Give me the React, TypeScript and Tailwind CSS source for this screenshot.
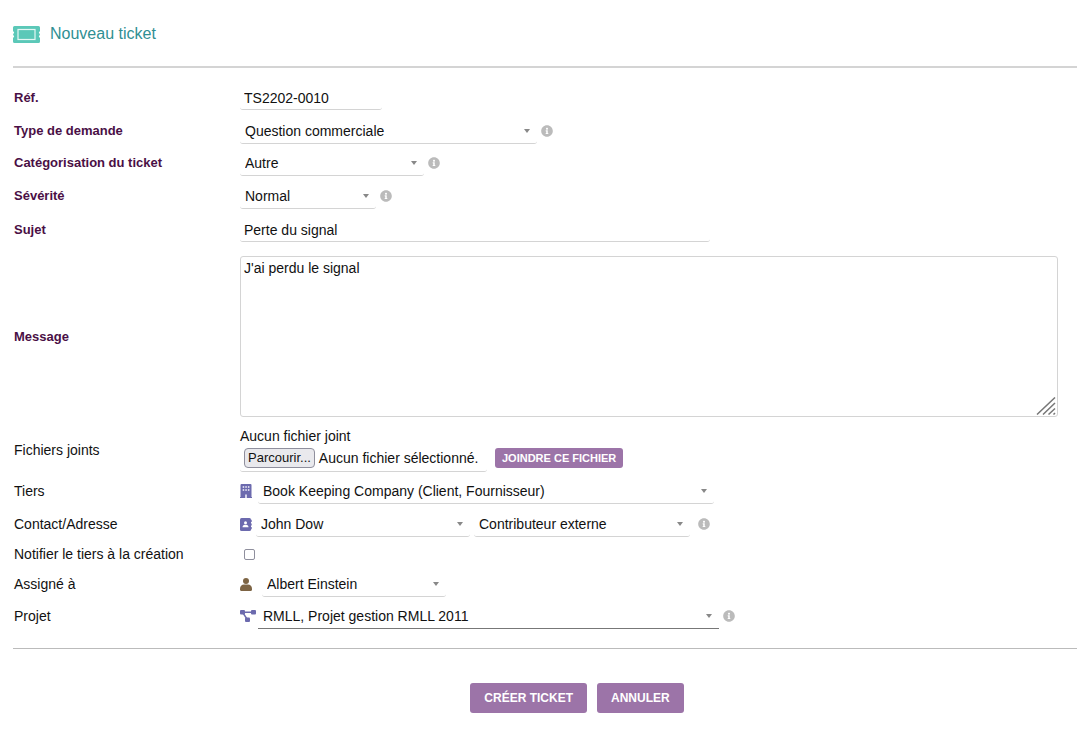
import { useRef } from 'react';
import type { ReactNode } from 'react';
import { FaInfoCircle } from 'react-icons/fa';
import clsx from 'clsx';

const line = 'border-b border-[#d4d4d4] rounded-[3px]';

function Row({ label, htmlFor, bold, height = 'h-8', children }: {
  label: string;
  htmlFor: string;
  bold?: boolean;
  height?: string;
  children: ReactNode;
}) {
  return (
    <div className={clsx('flex items-center', height)}>
      <label htmlFor={htmlFor} className={clsx('w-[226px] shrink-0', bold && 'text-[13px] font-bold text-[#4a0f45]')}>
        {label}
      </label>
      <div className="flex min-w-0 flex-1 items-center">{children}</div>
    </div>
  );
}

function Select({ id, value, width, label, className }: {
  id: string;
  value: string;
  width: string;
  label?: string;
  className?: string;
}) {
  return (
    <div className={clsx('relative', width)}>
      <select id={id} aria-label={label} className={clsx('block h-[26px] w-full appearance-none bg-white pr-6 pl-[5px] outline-none', className ?? line)}>
        <option>{value}</option>
      </select>
      <svg viewBox="0 0 6 4" className="pointer-events-none absolute top-[11px] right-[7px] h-1 w-1.5 fill-[#888]">
        <path d="M0 0h6L3 4z" />
      </svg>
    </div>
  );
}

function Info() {
  return <FaInfoCircle className="ml-1 size-3 shrink-0 text-[#bbb]" />;
}

function TicketIcon() {
  return (
    <svg viewBox="0 0 27 17" className="h-[17px] w-[27px]">
      <path
        fill="#5bc8b8"
        d="M1.500 0h24A1.500 1.500 0 0 1 27 1.500V5l-1.200 1.500L27 8.500l-1.200 2L27 12v3.500a1.500 1.500 0 0 1-1.500 1.500h-24A1.500 1.500 0 0 1 0 15.500V12l1.200-1.500L0 8.500l1.200-2L0 5V1.500A1.500 1.500 0 0 1 1.500 0z"
      />
      <rect x="5" y="3.500" width="17" height="10" fill="none" stroke="#e4f7f4" strokeWidth="1.200" />
    </svg>
  );
}

function BuildingIcon() {
  return (
    <svg viewBox="0 0 12 14" className="mr-1.5 h-3.5 w-3">
      <path fill="#6c6aae" d="M1.500 0h9a1 1 0 0 1 1 1v12h.5v1H0v-1h.5V1a1 1 0 0 1 1-1z" />
      <path fill="#d5d4ea" d="M2.700 2h1.500v2H2.700zM5.300 2h1.500v2H5.300zM7.900 2h1.500v2H7.900zM2.700 5h1.500v2H2.700zM5.300 5h1.500v2H5.300zM7.900 5h1.500v2H7.900zM5 10.500h2V14H5z" />
    </svg>
  );
}

function ContactIcon() {
  return (
    <svg viewBox="0 0 12 13" className="mr-1 h-[13px] w-3 fill-[#6c6aae]">
      <rect width="11" height="13" rx="1.500" />
      <path d="M11.300 1.800h.7v2.200h-.7zM11.300 5.400h.7v2.200h-.7zM11.300 9h.7v2.200h-.7z" />
      <circle cx="5.500" cy="4.700" r="1.500" fill="#fff" />
      <path fill="#fff" d="M2.500 9.200c0-1.500 1-2.400 2.300-2.400h1.400c1.300 0 2.300.9 2.300 2.400z" />
    </svg>
  );
}

function UserIcon() {
  return (
    <svg viewBox="0 0 12 13" className="mr-2.5 h-[13px] w-3 fill-[#7d6444]">
      <circle cx="6" cy="3" r="3" />
      <path d="M0 11c0-2.800 1.600-4.500 4-4.500h4c2.400 0 4 1.700 4 4.500v.8c0 .7-.5 1.200-1.200 1.200H1.200C.5 13 0 12.500 0 11.800z" />
    </svg>
  );
}

function ProjectIcon() {
  return (
    <svg viewBox="0 0 16 12" className="mr-0.5 h-3 w-4 fill-[#6c6aae]">
      <rect width="5" height="4.500" rx="1" />
      <rect x="11" width="5" height="4.500" rx="1" />
      <rect x="5" y="7.500" width="5" height="4.500" rx="1" />
      <path d="M4 2.200h8M3 3l4 6" stroke="#6c6aae" strokeWidth="1.400" />
    </svg>
  );
}

export default function App() {
  const fileInput = useRef<HTMLInputElement>(null);

  return (
    <form
      className="min-h-screen bg-white pl-[13px] font-['Liberation_Sans',Arial,sans-serif] text-sm leading-4 text-[#111]"
      onSubmit={(e) => e.preventDefault()}
    >
      {/* Title */}
      <header className="flex h-[68px] items-center gap-2.5 border-b-2 border-[#d4d4d4] pt-0.5">
        <TicketIcon />
        <h1 className="text-base leading-5 text-[#2f8f93]">Nouveau ticket</h1>
      </header>

      {/* Fields */}
      <section className="border-b border-[#bbb] pt-[13px] pb-4 pl-px">
        <Row label="Réf." htmlFor="ref" bold height="h-[34px]">
          <input id="ref" defaultValue="TS2202-0010" className={clsx('h-6 w-[142px] px-1 outline-none', line)} />
        </Row>
        <Row label="Type de demande" htmlFor="type" bold>
          <Select id="type" value="Question commerciale" width="w-[297px]" />
          <Info />
        </Row>
        <Row label="Catégorisation du ticket" htmlFor="category" bold>
          <Select id="category" value="Autre" width="w-[184px]" />
          <Info />
        </Row>
        <Row label="Sévérité" htmlFor="severity" bold height="h-[34px]">
          <Select id="severity" value="Normal" width="w-[136px]" />
          <Info />
        </Row>
        <Row label="Sujet" htmlFor="subject" bold height="h-[34px]">
          <input id="subject" defaultValue="Perte du signal" className={clsx('h-6 w-[470px] px-1 outline-none', line)} />
        </Row>
        <Row label="Message" htmlFor="message" bold height="py-[9px]">
          <div className="relative mr-[19px] flex-1">
            <textarea
              id="message"
              defaultValue="J'ai perdu le signal"
              className="block h-[161px] w-full resize-none rounded-[3px] border border-[#d4d4d4] px-[3px] py-[3px] outline-none"
            />
            <svg viewBox="0 0 20 18" className="pointer-events-none absolute right-0.5 bottom-0.5 h-[18px] w-5 stroke-[#777]">
              <path d="M1 17.500 19 .5M7 17.500l12-11.500M12.500 17.500l6.500-6M17.500 17.500l1.500-1.500" strokeWidth="1.500" fill="none" />
            </svg>
          </div>
        </Row>
        <Row label="Fichiers joints" htmlFor="file" height="h-12">
          <div>
            <p>Aucun fichier joint</p>
            <div className="flex items-center gap-2">
              <div className={clsx('flex h-7 w-[247px] items-center gap-1 pl-1', line)}>
                <button
                  type="button"
                  onClick={() => fileInput.current?.click()}
                  className="h-5 rounded-[4px] border border-[#8f8f9d] bg-[#e9e9ed] px-[3px] text-[13px]"
                >
                  Parcourir...
                </button>
                <span className="whitespace-nowrap">Aucun fichier sélectionné.</span>
                <input ref={fileInput} id="file" type="file" className="hidden" />
              </div>
              <button type="button" className="h-5 rounded-[3px] bg-[#9c74a8] px-[7px] text-[11px] font-bold text-white">
                JOINDRE CE FICHIER
              </button>
            </div>
          </div>
        </Row>
        <Row label="Tiers" htmlFor="company" height="h-[34px]">
          <BuildingIcon />
          <Select id="company" value="Book Keeping Company (Client, Fournisseur)" width="w-[456px]" />
        </Row>
        <Row label="Contact/Adresse" htmlFor="contact">
          <ContactIcon />
          <Select id="contact" value="John Dow" width="w-[214px]" />
          <div className="w-1" />
          <Select id="role" label="Rôle du contact" value="Contributeur externe" width="w-[216px]" />
          <div className="w-1" />
          <Info />
        </Row>
        <Row label="Notifier le tiers à la création" htmlFor="notify" height="h-7">
          <input
            id="notify"
            type="checkbox"
            className="ml-1 size-[11px] appearance-none rounded-[2px] border border-[#8f8f9d] bg-white checked:bg-[#9c74a8]"
          />
        </Row>
        <Row label="Assigné à" htmlFor="assignee">
          <UserIcon />
          <Select id="assignee" value="Albert Einstein" width="w-[184px]" />
        </Row>
        <Row label="Projet" htmlFor="project">
          <ProjectIcon />
          <Select id="project" value="RMLL, Projet gestion RMLL 2011" width="w-[461px]" className="border-b border-[#777]" />
          <Info />
        </Row>
      </section>

      {/* Actions */}
      <div className="flex justify-center gap-2.5 pt-[34px] pb-6 pl-16">
        <button type="submit" className="h-[30px] rounded-[3px] bg-[#9c74a8] px-3.5 text-xs font-bold text-white">
          CRÉER TICKET
        </button>
        <button type="button" className="h-[30px] rounded-[3px] bg-[#9c74a8] px-3.5 text-xs font-bold text-white">
          ANNULER
        </button>
      </div>
    </form>
  );
}
